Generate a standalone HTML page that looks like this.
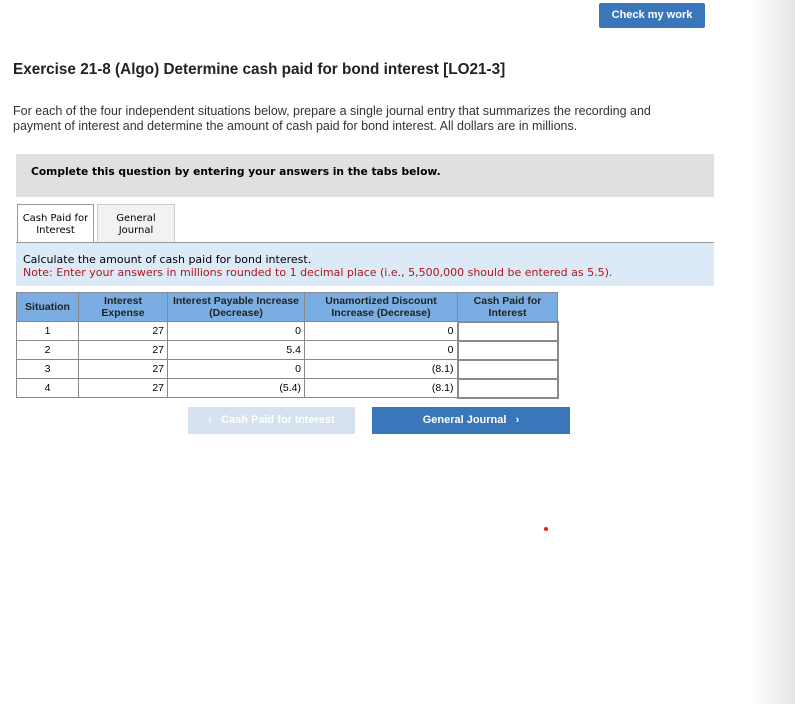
<!DOCTYPE html>
<html><head><style>
body{margin:0;width:795px;height:704px;position:relative;background:#fff;font-family:"Liberation Sans",sans-serif;overflow:hidden}
.shade{position:absolute;right:0;top:0;width:45px;height:704px;background:linear-gradient(to right,#fff,#e6e6e6)}
.chk{position:absolute;left:599px;top:3px;width:106px;height:25px;background:#3a76ba;border-radius:2px;color:#fff;font-weight:bold;font-size:11px;text-align:center;line-height:25px}
h1{position:absolute;left:13px;top:61px;margin:0;font-size:15.3px;font-weight:bold;color:#222}
.p{position:absolute;left:13px;top:104px;font-size:12.5px;color:#333;line-height:15px;width:678px}
.gray{position:absolute;left:16px;top:154px;width:698px;height:43px;background:#e0e0e0;font-family:"DejaVu Sans",sans-serif;font-weight:bold;font-size:10.7px;line-height:36px;box-sizing:border-box;padding-left:15px}
.tab{position:absolute;top:204px;height:39px;box-sizing:border-box;border:1px solid #ccc;font-family:"DejaVu Sans",sans-serif;font-size:10px;text-align:center;padding-top:8px;line-height:12px}
.line{position:absolute;left:16px;top:242px;width:698px;height:1px;background:#999}
.blue{position:absolute;left:16px;top:243px;width:698px;height:43px;background:#dceaf8;font-family:"DejaVu Sans",sans-serif;font-size:11px;box-sizing:border-box;padding:10px 0 0 7px;line-height:13px}
table{position:absolute;left:16px;top:292px;border-collapse:collapse;font-size:10.5px;table-layout:fixed;width:541px}
td,th{border:1px solid #888;height:19px;padding:0 3px;box-sizing:border-box;white-space:nowrap;overflow:hidden}
th{background:#7aaee2;height:29px;line-height:12px;font-weight:bold;color:#222;padding:0 1px;font-size:10.5px}
td{text-align:right}
td.c{text-align:center}
td.in{border:2px solid #8a8a8a;padding:0;background:#fff}
.btn{position:absolute;top:407px;height:27px;line-height:27px;font-size:11px;font-weight:bold;color:#fff;text-align:center}
</style></head><body>
<div class="shade"></div>
<div class="chk">Check my work</div>
<h1>Exercise 21-8 (Algo) Determine cash paid for bond interest [LO21-3]</h1>
<div class="p">For each of the four independent situations below, prepare a single journal entry that summarizes the recording and payment of interest and determine the amount of cash paid for bond interest. All dollars are in millions.</div>
<div class="gray">Complete this question by entering your answers in the tabs below.</div>
<div class="tab" style="left:17px;width:77px;background:#fff;border-color:#999;border-bottom:none">Cash Paid for<br>Interest</div>
<div class="tab" style="left:97px;width:78px;background:#f2f2f2">General<br>Journal</div>
<div class="line"></div>
<div class="blue">Calculate the amount of cash paid for bond interest.<br><span style="color:#b0141a">Note: Enter your answers in millions rounded to 1 decimal place (i.e., 5,500,000 should be entered as 5.5).</span></div>
<table>
<colgroup><col style="width:62px"><col style="width:89px"><col style="width:137px"><col style="width:153px"><col style="width:100px"></colgroup>
<tr><th>Situation</th><th>Interest<br>Expense</th><th>Interest Payable Increase<br>(Decrease)</th><th>Unamortized Discount<br>Increase (Decrease)</th><th>Cash Paid for<br>Interest</th></tr>
<tr><td class="c">1</td><td>27</td><td>0</td><td>0</td><td class="in"></td></tr>
<tr><td class="c">2</td><td>27</td><td>5.4</td><td>0</td><td class="in"></td></tr>
<tr><td class="c">3</td><td>27</td><td>0</td><td>(8.1)</td><td class="in"></td></tr>
<tr><td class="c">4</td><td>27</td><td>(5.4)</td><td>(8.1)</td><td class="in"></td></tr>
</table>
<div class="btn" style="left:188px;width:167px;background:#d6e2f0">&#8249;&nbsp;&nbsp; Cash Paid for Interest</div>
<div class="btn" style="left:372px;width:198px;background:#3a76ba">General Journal &nbsp;&nbsp;&#8250;</div>
<div style="position:absolute;left:544px;top:527px;width:4px;height:4px;border-radius:50%;background:#e02020"></div>
</body></html>
